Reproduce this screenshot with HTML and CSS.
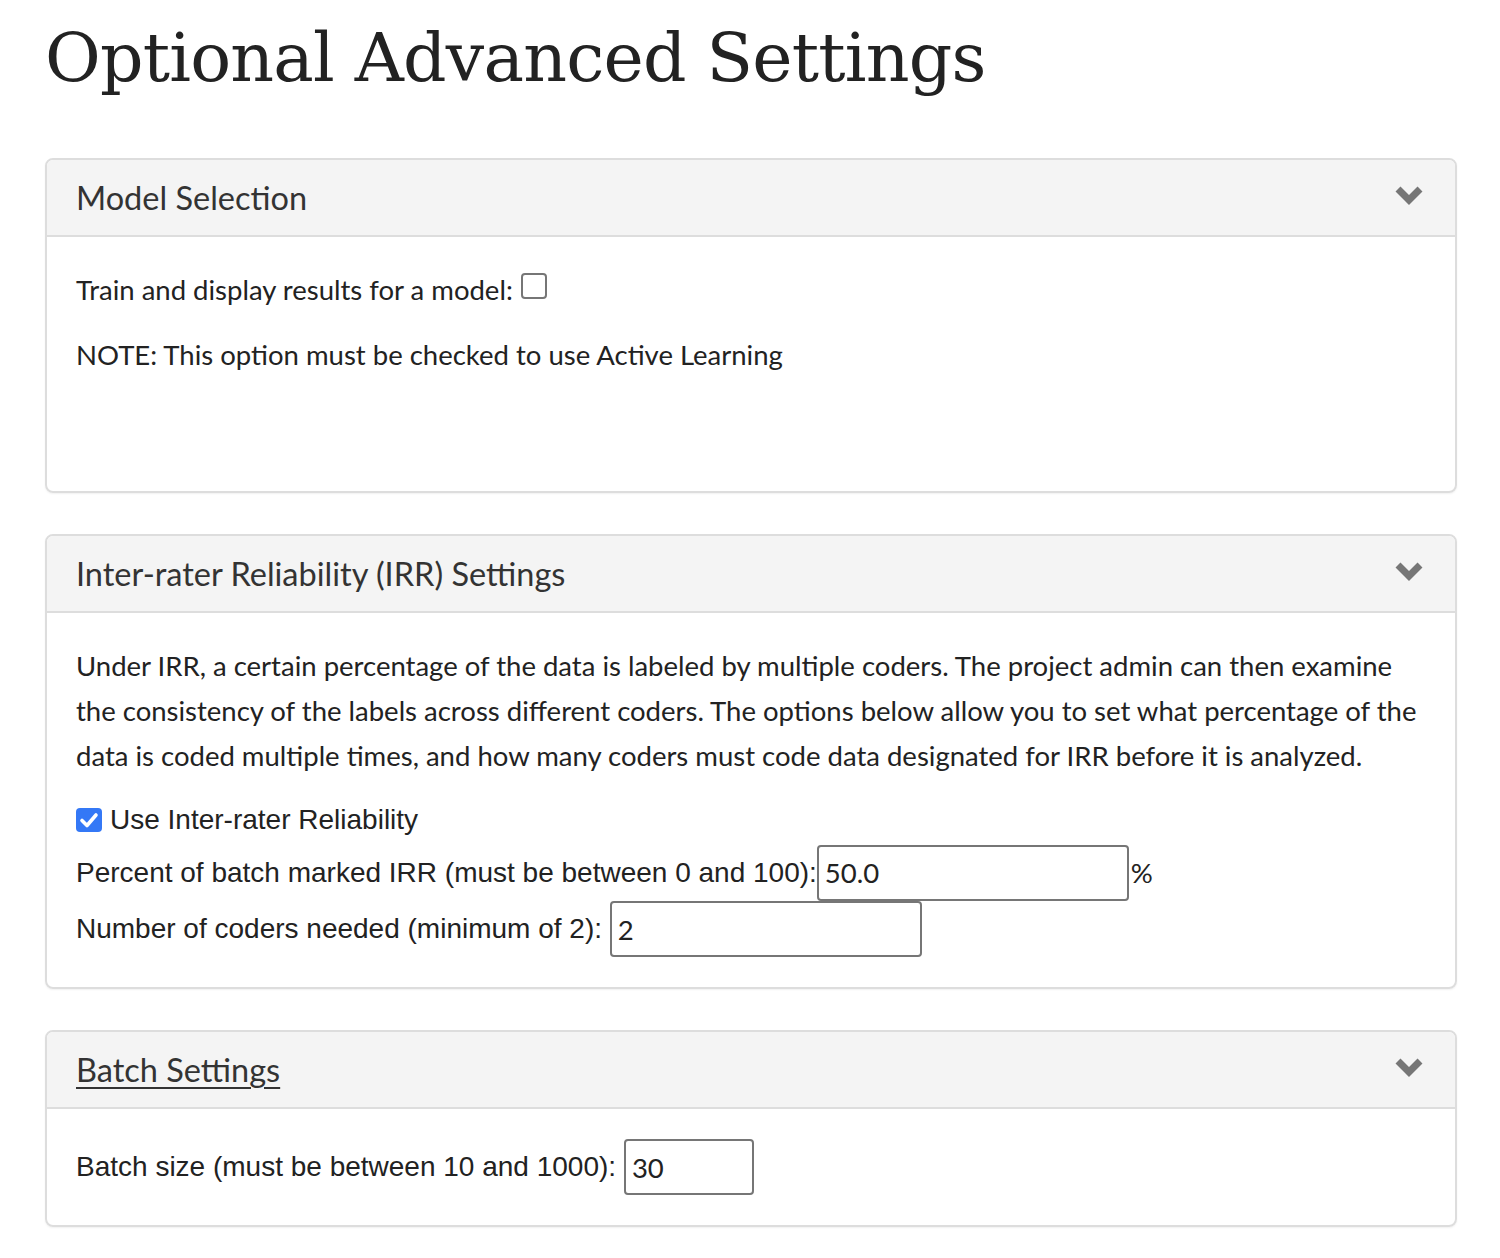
FILE: index.html
```html
<!DOCTYPE html>
<html>
<head>
<meta charset="utf-8">
<link rel="stylesheet" href="styles.css">
</head>
<body>
<div class="page">
  <h1 class="title">Optional Advanced Settings</h1>

  <section class="panel">
    <div class="panel-heading">
      <h2 class="panel-title">Model Selection</h2>
      <svg class="chevron" viewBox="0 0 30 22" width="30" height="22"><polyline points="4,5 15,16 26,5" /></svg>
    </div>
    <div class="panel-body body-model">
      <p class="line">Train and display results for a model: <span class="box"></span></p>
      <p class="line">NOTE: This option must be checked to use Active Learning</p>
    </div>
  </section>

  <section class="panel">
    <div class="panel-heading">
      <h2 class="panel-title">Inter-rater Reliability (IRR) Settings</h2>
      <svg class="chevron" viewBox="0 0 30 22" width="30" height="22"><polyline points="4,5 15,16 26,5" /></svg>
    </div>
    <div class="panel-body">
      <p class="para">Under IRR, a certain percentage of the data is labeled by multiple coders. The project admin can then examine the consistency of the labels across different coders. The options below allow you to set what percentage of the data is coded multiple times, and how many coders must code data designated for IRR before it is analyzed.</p>
      <div class="check-row">
        <span class="box checked"><svg viewBox="0 0 26 24" width="26" height="24"><polyline points="6,12.5 11,17.5 20,7" /></svg></span>
        <span class="form-label">Use Inter-rater Reliability</span>
      </div>
      <div class="field-row">
        <span class="form-label">Percent of batch marked IRR (must be between 0 and 100):</span><span class="input wide">50.0</span><span class="unit">%</span>
      </div>
      <div class="field-row">
        <span class="form-label">Number of coders needed (minimum of 2): </span><span class="input wide">2</span>
      </div>
    </div>
  </section>

  <section class="panel">
    <div class="panel-heading">
      <h2 class="panel-title link">Batch Settings</h2>
      <svg class="chevron" viewBox="0 0 30 22" width="30" height="22"><polyline points="4,5 15,16 26,5" /></svg>
    </div>
    <div class="panel-body">
      <div class="field-row">
        <span class="form-label">Batch size (must be between 10 and 1000): </span><span class="input narrow">30</span>
      </div>
    </div>
  </section>
</div>
</body>
</html>
```

FILE: styles.css
```css
html, body {
  margin: 0;
  padding: 0;
  background: #fff;
}

.page {
  padding: 0 43px 0 45px;
  font-family: Lato, "Liberation Sans", sans-serif;
  color: #222;
}

.title {
  margin: 0;
  padding-top: 18px;
  padding-bottom: 60px;
  font-family: "DejaVu Serif", serif;
  font-weight: 400;
  font-size: 68px;
  line-height: 80px;
  color: #222;
  letter-spacing: -0.8px;
}

.panel {
  border: 2px solid #ddd;
  border-radius: 8px;
  margin-bottom: 41px;
  box-shadow: 0 1px 2px rgba(0,0,0,0.06);
  overflow: hidden;
}

.panel-heading {
  display: flex;
  align-items: center;
  justify-content: space-between;
  background: #f4f4f4;
  border-bottom: 2px solid #ddd;
  height: 75px;
  padding: 0 31px 0 29px;
}

.panel-title {
  margin: 0;
  font-family: Lato, sans-serif;
  font-weight: 400;
  font-size: 32.5px;
  color: #333;
  line-height: 40px;
}

.panel-title.link {
  text-decoration: underline;
  text-decoration-thickness: 2px;
  text-underline-offset: 5px;
}

.chevron {
  margin-top: -6px;
}

.chevron polyline {
  fill: none;
  stroke: #767676;
  stroke-width: 7;
  stroke-linejoin: miter;
}

.panel-body {
  padding: 30px 29px 30px 29px;
  font-size: 27.5px;
}

.body-model {
  min-height: 194px;
  box-sizing: content-box;
}

.line {
  margin: 0 0 20px 0;
  line-height: 45px;
  display: flex;
  align-items: center;
  gap: 8px;
}

.para {
  margin: 0 0 20px 0;
  line-height: 45px;
}

.box {
  display: inline-block;
  width: 22px;
  height: 22px;
  border: 2px solid #767676;
  border-radius: 4px;
  margin-top: -8px;
}

.box.checked {
  width: 26px;
  height: 24px;
  border: none;
  background: #3478f6;
  border-radius: 4px;
  margin-top: 0;
}

.box.checked svg {
  display: block;
}

.box.checked polyline {
  fill: none;
  stroke: #fff;
  stroke-width: 3.6;
  stroke-linecap: round;
  stroke-linejoin: round;
}

.check-row {
  display: flex;
  align-items: center;
  gap: 8px;
  height: 44px;
  margin-top: 2px;
  margin-bottom: 2px;
}

.form-label {
  font-family: "Liberation Sans", Arial, sans-serif;
  font-size: 28px;
  color: #222;
  white-space: pre;
}

.field-row {
  display: flex;
  align-items: center;
  height: 57px;
}

.input {
  box-sizing: border-box;
  height: 56px;
  border: 2px solid #767676;
  border-radius: 4px;
  padding: 0 6px;
  font-family: Lato, sans-serif;
  font-size: 27.5px;
  color: #222;
  display: flex;
  align-items: center;
}

.input.wide {
  width: 312px;
}

.input.narrow {
  width: 130px;
}

.unit {
  font-family: Lato, sans-serif;
  font-size: 27.5px;
  margin-left: 2px;
}

.field-row:last-child {
  height: 56px;
}
```
